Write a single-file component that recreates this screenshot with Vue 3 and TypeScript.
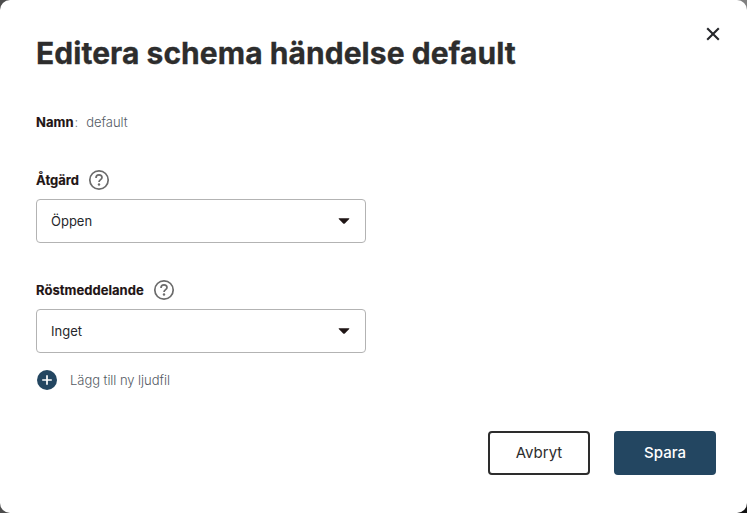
<script setup lang="ts">
import { ref } from 'vue'

interface Field {
  id: string
  label: string
  value: string
}

const title = ref('Editera schema händelse default')
const name = ref('default')
const fields: Field[] = [
  { id: 'action', label: 'Åtgärd', value: 'Öppen' },
  { id: 'message', label: 'Röstmeddelande', value: 'Inget' },
]
</script>

<template>
  <div class="backdrop">
    <section class="modal">
      <header class="header">
        <h1 class="title">{{ title }}</h1>
        <button class="close" type="button">
          <svg width="14" height="14" viewBox="0 0 14 14">
            <path d="M1.2 1.2 12.8 12.8M12.8 1.2 1.2 12.8" fill="none" stroke="#26272b" stroke-width="2.1" />
          </svg>
        </button>
      </header>

      <p class="name-row"><span class="label">Namn</span><span class="colon">:</span><span class="name">{{ name }}</span></p>

      <div v-for="field in fields" :key="field.id" class="field">
        <div class="field-head">
          <span class="label">{{ field.label }}</span>
          <svg class="help" width="22" height="22" viewBox="0 0 22 22" fill="none" stroke="#6b6b6b">
            <circle cx="11" cy="11" r="9.2" stroke-width="1.7" />
            <path d="M8 8.9C8 7 9.3 5.9 11 5.9s3 1.1 3 2.7c0 2-3 2.2-3 4.4" stroke-width="1.7" />
            <circle cx="11" cy="15.5" r="1.2" fill="#6b6b6b" stroke="none" />
          </svg>
        </div>
        <button class="select" type="button">
          <span>{{ field.value }}</span>
          <svg width="12" height="6" viewBox="0 0 12 6">
            <path d="M1 .2h10q.7.2.2.8L6.8 5.4q-.8.6-1.6 0L.8 1Q.3.4 1 .2z" fill="#1f1515" />
          </svg>
        </button>
      </div>

      <button class="add" type="button">
        <svg width="20" height="20" viewBox="0 0 20 20">
          <circle cx="10" cy="10" r="10" fill="#234661" />
          <path d="M10 5.2v9.6M5.2 10h9.6" stroke="#fff" stroke-width="1.7" />
        </svg>
        <span>Lägg till ny ljudfil</span>
      </button>

      <footer class="footer">
        <button class="btn cancel" type="button">Avbryt</button>
        <button class="btn save" type="button">Spara</button>
      </footer>
    </section>
  </div>
</template>

<style>
body {
  background: #4d4d4d;
}
</style>

<style scoped>
.backdrop {
  height: 513px;
  overflow: hidden;
  font-family: Inter, 'Liberation Sans', sans-serif;
  background: linear-gradient(90deg, #4d4d4d 50%, #808080 50%) top / 100% 50% no-repeat,
    linear-gradient(90deg, #4d4d4d 50%, #111 50%) bottom / 100% 50% no-repeat;
}
.modal {
  box-sizing: border-box;
  height: 513px;
  padding: 0 31px 38px 36px;
  display: flex;
  flex-direction: column;
  background: #fff;
  border-radius: 10px;
}
button {
  padding: 0;
  border: 0;
  background: none;
  font-family: inherit;
  cursor: pointer;
}
.header {
  height: 106px;
  display: flex;
  justify-content: space-between;
}
.title {
  margin: 33px 0 0;
  font-size: 30px;
  line-height: 40px;
  font-weight: 700;
  letter-spacing: 0.05px;
  color: #2d2d2d;
  -webkit-text-stroke: 0.3px #2d2d2d;
  white-space: nowrap;
}
.close {
  width: 14px;
  height: 14px;
  margin: 27px -4px 0 0;
}
.close svg,
.select svg,
.add svg,
.help {
  display: block;
  flex: none;
}
.name-row {
  margin: 0 0 31px;
  height: 32px;
  line-height: 32px;
  display: flex;
  font-size: 13px;
}
.label {
  font-size: 13px;
  font-weight: 700;
  letter-spacing: 0.03px;
  color: #1f1515;
  -webkit-text-stroke: 0.15px #1f1515;
}
.colon,
.name {
  font-weight: 300;
  color: #545b64;
}
.colon {
  margin-left: 1px;
}
.name {
  margin-left: 8px;
  letter-spacing: -0.03px;
}
.field {
  width: 330px;
  height: 74px;
  flex: none;
  margin-bottom: 36px;
}
.field-head {
  height: 22px;
  margin-bottom: 8px;
  display: flex;
  align-items: center;
  gap: 9px;
}
.select {
  box-sizing: border-box;
  width: 330px;
  height: 44px;
  padding: 0 15px 0 14px;
  display: flex;
  align-items: center;
  justify-content: space-between;
  border: 1px solid #b3b3b3;
  border-radius: 4px;
  font-size: 13px;
  color: #26272b;
}
.add {
  height: 20px;
  margin: -19px 0 0 1px;
  display: flex;
  align-items: center;
  gap: 13px;
  font-size: 13px;
  font-weight: 300;
  letter-spacing: -0.05px;
  color: #545b64;
}
.footer {
  margin-top: auto;
  display: flex;
  justify-content: flex-end;
  gap: 24px;
}
.btn {
  box-sizing: border-box;
  width: 102px;
  height: 44px;
  padding-bottom: 2px;
  border-radius: 4px;
  font-size: 15px;
}
.cancel {
  border: 2px solid #2d2d2d;
  color: #2d2d2d;
}
.save {
  background: #234661;
  color: #fff;
  font-weight: 500;
}
</style>
